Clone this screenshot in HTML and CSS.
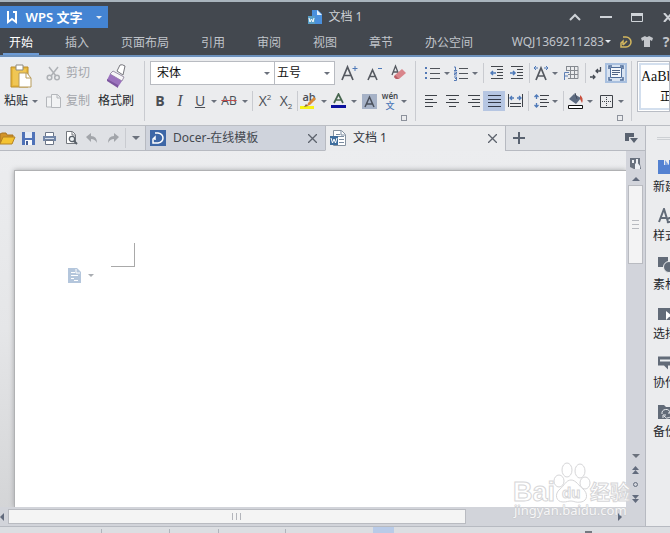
FILE: index.html
```html
<!DOCTYPE html>
<html lang="zh-CN">
<head>
<meta charset="utf-8">
<meta name="viewport" content="width=device-width, initial-scale=1">
<title>文档 1 - WPS 文字</title>
<link rel="stylesheet" href="styles.css">
</head>
<body>
<header class="top">
  <div class="titlebar">
    <button class="brand" type="button">
      <svg width="12" height="13" viewBox="0 0 12 13" fill="none" stroke="#fff" stroke-width="2"><path d="M2 0v11L6 8l4 3V1H7"/></svg>
      <span>WPS 文字</span>
      <i class="caret light"></i>
    </button>
    <div class="doc-title">
      <svg width="15" height="15" viewBox="0 0 15 15"><path d="M4 0h6l4 4v10H4z" fill="#4a90dd"/><path d="M9 0l5 5H9z" fill="#e4f0fb"/><path d="M0 6h7v8H0z" fill="#5aa0c8"/><path d="M1 8l1 4 1.500-3L5 12l1-4" fill="none" stroke="#fff"/></svg>
      <span>文档 1</span>
    </div>
    <div class="window-buttons">
      <button type="button" aria-label="折叠功能区"><svg width="12" height="8" viewBox="0 0 12 8" fill="none" stroke="#cfd3d8" stroke-width="2"><path d="M1 7l5-5 5 5"/></svg></button>
      <button type="button" aria-label="最小化"><svg width="12" height="8" viewBox="0 0 12 8"><path d="M0 3h12v2H0z" fill="#cfd3d8"/></svg></button>
      <button type="button" aria-label="最大化"><svg width="12" height="9" viewBox="0 0 12 9"><path d="M.5.5h11v8H.5z" fill="none" stroke="#cfd3d8"/><path d="M0 0h12v3H0z" fill="#cfd3d8"/></svg></button>
      <button type="button" aria-label="关闭"><svg width="10" height="9" viewBox="0 0 10 9" stroke="#cfd3d8" stroke-width="2"><path d="M1 0l8 9M9 0L1 9"/></svg></button>
    </div>
  </div>
  <nav class="menu">
    <a class="active" href="#">开始</a><a href="#">插入</a><a href="#">页面布局</a><a href="#">引用</a><a href="#">审阅</a><a href="#">视图</a><a href="#">章节</a><a href="#">办公空间</a>
    <div class="account">
      <button class="user" type="button">WQJ1369211283<i class="caret light"></i></button>
      <button type="button" aria-label="Docer"><svg width="12" height="12" viewBox="0 0 12 12" fill="none" stroke="#d3b75f" stroke-width="1.500"><path d="M3 1h3a5 5 0 0 1 0 10H1V7l2-2v4M3 9l4-4"/></svg></button>
      <button type="button" aria-label="皮肤"><svg width="12" height="11" viewBox="0 0 12 11"><path d="M0 2l4-2q2 2 4 0l4 2-1 3-2-1v7H3V4L1 5z" fill="#c4c7cc"/></svg></button>
      <button class="help" type="button">?</button>
    </div>
  </nav>
</header>

<section class="ribbon">
  <div class="clipboard">
    <button class="big paste" type="button">
      <svg width="22" height="25" viewBox="0 0 22 25"><path d="M1 3h17v20H1z" fill="#e9b93d" stroke="#b98b2b"/><path d="M3 5h13v16H3z" fill="#f0c654"/><path d="M6 1h7v5H6z" fill="#fff" stroke="#8d8a80"/><path d="M9 9h8l4 5v9H9z" fill="#fff" stroke="#b79b5a"/><path d="M16 9v5h5" fill="none" stroke="#b79b5a"/></svg>
      <span>粘贴<i class="caret"></i></span>
    </button>
    <div class="stack">
      <button type="button" disabled><svg width="15" height="15" viewBox="0 0 15 15" fill="none" stroke="#aeb1b5" stroke-width="1.500"><path d="M3 1l7 9M12 1L5 10"/><circle cx="3.500" cy="11.500" r="2.300"/><circle cx="11" cy="11.500" r="2.300"/></svg>剪切</button>
      <button type="button" disabled><svg width="15" height="15" viewBox="0 0 15 15" fill="#f2f3f4" stroke="#b4b7bb"><path d="M5 3H.5v10H6"/><path d="M5.500.5h6l3 3v10h-9zM11 .5V4h3.500"/></svg>复制</button>
    </div>
    <button class="big painter" type="button">
      <svg width="21" height="25" viewBox="0 0 21 25"><path d="M14 1q2-1 5 1l-2 9-6-4z" fill="#fff" stroke="#77777d"/><path d="M7 7l11 6-2 4L4 10z" fill="#f7f5f8" stroke="#9b92a8"/><path d="M4 10l12 7-4 6L1 16z" fill="#9b72bd"/><path d="M1 15l11 6v3L1 17z" fill="#7d569f"/></svg>
      <span>格式刷</span>
    </button>
  </div>

  <div class="group font-group">
    <div class="row font-picks">
      <label class="pick name"><select aria-label="字体"><option>宋体</option></select><i class="caret"></i></label>
      <label class="pick size"><select aria-label="字号"><option>五号</option></select><i class="caret"></i></label>
      <div class="size-tools">
      <button type="button" aria-label="增大字号"><svg width="18" height="18" viewBox="0 0 18 18" fill="none"><path d="M1 16L6.500 3 12 16M3 11.500h7" stroke="#555960" stroke-width="1.700"/><path d="M14 2v5M11.500 4.500h5" stroke="#4e79b8"/></svg></button>
      <button type="button" aria-label="减小字号"><svg width="18" height="18" viewBox="0 0 18 18" fill="none"><path d="M2 16L6.500 6 11 16M3.500 12.500h6" stroke="#555960" stroke-width="1.600"/><path d="M12 4.500h4" stroke="#4e79b8"/></svg></button>
      <button type="button" aria-label="清除格式"><svg width="16" height="18" viewBox="0 0 16 18"><path d="M1 11l3.500-9L8 11M2 8h5" fill="none" stroke="#555960" stroke-width="1.300"/><path d="M4 11l7-6 4 4-7 6H5l-2-2z" fill="#d9858b"/><path d="M4 11l4 4H5l-2-2z" fill="#b75e67"/></svg></button>
      </div>
    </div>
    <div class="row font-tools">
      <button class="glyph bold" type="button">B</button>
      <button class="glyph italic" type="button">I</button>
      <button class="glyph under" type="button">U</button>
      <button type="button" aria-label="下划线样式"><i class="caret"></i></button>
      <button class="glyph strike" type="button">AB</button>
      <button type="button" aria-label="删除线样式"><i class="caret"></i></button>
      <i class="sep"></i>
      <button class="glyph" type="button">X<sup>2</sup></button>
      <button class="glyph" type="button">X<sub>2</sub></button>
      <i class="sep"></i>
      <button class="glyph mark" type="button">ab<svg width="16" height="16" viewBox="0 0 16 16"><path d="M0 12h14v3H0z" fill="#f7f315"/><path d="M14 3l2 2-6 6-3 1 1-3z" fill="#dc8a35"/><path d="M6 10l2 2-4 1z" fill="#8a6545"/></svg></button>
      <button type="button" aria-label="突出显示颜色"><i class="caret"></i></button>
      <button type="button" aria-label="字体颜色"><svg width="16" height="16" viewBox="0 0 16 16"><path d="M3 10L7.500 1 12 10M4.500 7h6" fill="none" stroke="#48664f" stroke-width="1.700"/><path d="M0 12h15v3H0z" fill="#0c119e"/></svg></button>
      <button type="button" aria-label="选择字体颜色"><i class="caret"></i></button>
      <button type="button" aria-label="字符底纹"><svg width="15" height="15" viewBox="0 0 15 15"><path d="M0 0h15v15H0z" fill="#a6b2c7"/><path d="M3 13L7.500 3 12 13M4.500 10h6" fill="none" stroke="#4a505b" stroke-width="1.500"/></svg></button>
      <button class="phonetic" type="button"><span>wén</span><b>文</b></button>
      <button type="button" aria-label="拼音指南选项"><i class="caret"></i></button>
    </div>
    <button class="launch" type="button" aria-label="字体设置"></button>
  </div>

  <div class="group para-group">
    <div class="row para-top">
      <button type="button" aria-label="项目符号"><svg width="15" height="13" viewBox="0 0 15 13"><path d="M0 0h2v2H0zM0 5h2v2H0zM0 10h2v2H0z" fill="#5479b5"/><path d="M5 1.500h10M5 6.500h10M5 11.500h10" stroke="#50545a"/></svg></button>
      <button type="button" aria-label="项目符号样式"><i class="caret"></i></button>
      <button type="button" aria-label="编号"><svg width="14" height="15" viewBox="0 0 14 15" fill="none"><path d="M5 2.500h9M5 7.500h9M5 12.500h9" stroke="#50545a"/><path d="M0 1h1.500v3M0 4.500h3M0 6h2.500v1.500H.5v1.500H3M0 11h2.500v3.500H0M1 12.500h2" stroke="#5479b5"/></svg></button>
      <button type="button" aria-label="编号样式"><i class="caret"></i></button>
      <i class="sep"></i>
      <button type="button" aria-label="减少缩进"><svg width="14" height="14" viewBox="0 0 14 14" fill="none"><path d="M1 .5h12M7 3.500h6M7 6.500h6M7 9.500h6M1 12.500h12" stroke="#44484d"/><path d="M6 7H1M3 5L1 7l2 2" stroke="#4e79b8" stroke-width="1.500"/></svg></button>
      <button type="button" aria-label="增加缩进"><svg width="14" height="14" viewBox="0 0 14 14" fill="none"><path d="M1 .5h12M7 3.500h6M7 6.500h6M7 9.500h6M1 12.500h12" stroke="#44484d"/><path d="M0 7h5M3 5l2 2-2 2" stroke="#4e79b8" stroke-width="1.500"/></svg></button>
      <i class="sep"></i>
      <button type="button" aria-label="中文版式"><svg width="16" height="16" viewBox="0 0 16 16" fill="none"><path d="M3 15L8 3l5 12M4.500 11h7" stroke="#555960" stroke-width="1.700"/><path d="M1 3h4M3 1L1 3l2 2M11 3h4M13 1l2 2-2 2" stroke="#4e79b8"/></svg></button>
      <button type="button" aria-label="中文版式选项"><i class="caret"></i></button>
      <button type="button" aria-label="插入表格"><svg width="15" height="14" viewBox="0 0 15 14" fill="none"><path d="M2 .5h12v12H4M2 4.500h12M4 8.500h10M6.500.5v12M10.500.5v12M2.500 0v5" stroke="#85898f"/><path d="M.5 14V6.500H5M0 10h4" stroke="#5f80b5"/></svg></button>
      <i class="sep"></i>
      <button type="button" aria-label="显示段落标记"><svg width="12" height="13" viewBox="0 0 12 13" fill="none" stroke="#444a53" stroke-width="1.300"><path d="M10.500 0v4H6M8 2L6 4l2 2M0 10h5M3 8l2 2-2 2"/></svg></button>
      <button class="selected framed" type="button" aria-label="段落布局"><svg width="16" height="16" viewBox="0 0 16 16" fill="none"><path d="M2.500 2.500h11v10h-11z" fill="#f3f6fa" stroke="#4f6d99"/><path d="M4 5.500h8M4 7.500h8M4 9.500h6" stroke="#4f6383"/><path d="M1 4V1h3M12 1h3v3M15 12v3h-3M4 15H1v-3" stroke="#4f6d99" stroke-width="1.500"/></svg></button>
    </div>
    <div class="row para-bottom">
      <button type="button" aria-label="左对齐"><svg width="13" height="12" viewBox="0 0 13 12" stroke="#3e4248"><path d="M0 .5h12M0 4.500h8M0 7.500h12M0 11.500h8"/></svg></button>
      <button type="button" aria-label="居中"><svg width="13" height="12" viewBox="0 0 13 12" stroke="#3e4248"><path d="M0 .5h13M3 4.500h7M0 7.500h13M3 11.500h7"/></svg></button>
      <button type="button" aria-label="右对齐"><svg width="13" height="12" viewBox="0 0 13 12" stroke="#3e4248"><path d="M1 .5h12M5 4.500h8M1 7.500h12M5 11.500h8"/></svg></button>
      <button class="selected" type="button" aria-label="两端对齐"><svg width="13" height="12" viewBox="0 0 13 12" stroke="#333a49"><path d="M0 .5h13M0 4.500h13M0 7.500h13M0 11.500h13"/></svg></button>
      <button type="button" aria-label="分散对齐"><svg width="15" height="14" viewBox="0 0 15 14" fill="none"><path d="M.5 0v13M14.500 0v13M2 9.500h11M2 12.500h11" stroke="#3e4248"/><path d="M2 4h4M4 2L2 4l2 2M9 4h4M11 2l2 2-2 2" stroke="#4e79b8" stroke-width="1.300"/></svg></button>
      <i class="sep"></i>
      <button type="button" aria-label="行距"><svg width="15" height="14" viewBox="0 0 15 14" fill="none"><path d="M6 1.500h9M6 5.500h7M6 8.500h9M6 12.500h7" stroke="#3e4248"/><path d="M2.500 1v4M.5 3l2-2 2 2M2.500 9v4M.5 11l2 2 2-2" stroke="#4e79b8" stroke-width="1.300"/></svg></button>
      <button type="button" aria-label="行距选项"><i class="caret"></i></button>
      <i class="sep"></i>
      <button type="button" aria-label="底纹颜色"><svg width="16" height="16" viewBox="0 0 16 16"><path d="M6 1l7 4-5 6-7-5z" fill="#5d6b80"/><path d="M7 0l2 6" stroke="#434d5e" fill="none"/><path d="M12 2q4 3 2 8l-2-4z" fill="#c9503f"/><path d="M.5 12.500h14v3H.5z" fill="#fff" stroke="#111"/></svg></button>
      <button type="button" aria-label="选择底纹颜色"><i class="caret"></i></button>
      <button type="button" aria-label="边框"><svg width="13" height="13" viewBox="0 0 13 13" fill="none" stroke="#3e4248"><path d="M.5.500h12v12H.5z"/><path d="M2 6.500h10M6.500 2v10" stroke-dasharray="1 1"/></svg></button>
      <button type="button" aria-label="边框样式"><i class="caret"></i></button>
    </div>
    <button class="launch" type="button" aria-label="段落设置"></button>
  </div>

  <div class="styles">
    <button class="style-card" type="button"><span>AaBbCcDd</span><b>正文</b></button>
  </div>
</section>

<div class="workspace">
  <main class="editor">
    <div class="docbar">
      <div class="quick">
        <button type="button" aria-label="打开"><svg width="17" height="13" viewBox="0 0 17 13"><path d="M1 11V2l2-1h4l1 2h6v3" fill="#d29328" stroke="#a87422"/><path d="M4 5h12l-3 7H1z" fill="#f4c332" stroke="#b58323"/></svg></button>
        <button type="button" aria-label="保存"><svg width="13" height="13" viewBox="0 0 13 13"><path d="M0 0h13v13H0z" fill="#4f72b8"/><path d="M3 0h7v6H3z" fill="#e6ecf6"/><path d="M3 8h7v5H3z" fill="#f7f9fc"/><path d="M4 9h2v4H4z" fill="#455f98"/></svg></button>
        <button type="button" aria-label="打印"><svg width="13" height="13" viewBox="0 0 13 13"><path d="M2.500.5h8v4h-8z" fill="#fff" stroke="#6c7688"/><path d="M0 4h13v5H0z" fill="#7286a8"/><path d="M2 6h9v1H2z" fill="#d5deeb"/><path d="M2.500 8.500h8v4h-8z" fill="#fff" stroke="#6c7688"/></svg></button>
        <button type="button" aria-label="打印预览"><svg width="13" height="14" viewBox="0 0 13 14"><path d="M1.500.5h6l3 3v9h-9z" fill="#fff" stroke="#73777d"/><path d="M7 1v3h3" fill="none" stroke="#73777d"/><circle cx="7" cy="8" r="2.700" fill="#edf2f5" stroke="#596069" stroke-width="1.300"/><path d="M9 10l3 3" stroke="#596069" stroke-width="2"/></svg></button>
        <button type="button" aria-label="撤销"><svg width="12" height="10" viewBox="0 0 12 10"><path d="M5 0v3q6 0 6 7-2-4-6-4v3L0 4z" fill="#a2a5aa"/></svg></button>
        <button type="button" aria-label="恢复"><svg width="12" height="10" viewBox="0 0 12 10"><path d="M7 0v3q-6 0-6 7 2-4 6-4v3l5-5z" fill="#a2a5aa"/></svg></button>
        <i class="sep"></i>
        <button type="button" aria-label="自定义快速访问"><i class="caret wide"></i></button>
      </div>
      <div class="doc-tab">
        <svg width="16" height="16" viewBox="0 0 16 16"><path d="M0 0h16v16H0z" fill="#3d67a7"/><path d="M5 3h3q5 1 5 5t-5 5H3V9l2-2v3" fill="none" stroke="#fff" stroke-width="1.500"/></svg>
        <a href="#">Docer-在线模板</a>
        <button type="button" aria-label="关闭 Docer"><svg width="9" height="9" viewBox="0 0 9 9" stroke="#5d636d" stroke-width="1.300"><path d="M0 0l9 9M9 0L0 9"/></svg></button>
      </div>
      <div class="doc-tab current">
        <svg width="16" height="16" viewBox="0 0 16 16"><path d="M3.500.5h8l4 4v11h-12z" fill="#fff" stroke="#85919f"/><path d="M11 1v4h4M6 4.500h4M6 6.500h8M9 9.500h5M9 12.500h5" stroke="#7c8da1" fill="none"/><path d="M0 6h8v9H0z" fill="#3e6d9d"/><path d="M1 8l1.500 5L4 9l1.500 4L7 8" stroke="#fff" fill="none"/></svg>
        <a href="#">文档 1</a>
        <button type="button" aria-label="关闭文档 1"><svg width="9" height="9" viewBox="0 0 9 9" stroke="#5d636d" stroke-width="1.300"><path d="M0 0l9 9M9 0L0 9"/></svg></button>
      </div>
      <div class="tab-rest">
        <button type="button" aria-label="新建标签"><svg width="12" height="12" viewBox="0 0 12 12" fill="#596270"><path d="M5 0h2v5h5v2H7v5H5V7H0V5h5z"/></svg></button>
        <button type="button" aria-label="标签列表"><svg width="13" height="11" viewBox="0 0 13 11" fill="#596270"><path d="M0 0h9v4H4v4H0zM5 5h8L9 10z"/></svg></button>
      </div>
    </div>

    <div class="view">
      <div class="canvas">
        <article class="page" contenteditable="true" aria-label="文档内容">
          <div class="corner"></div>
          <div class="paste-options">
            <svg width="13" height="15" viewBox="0 0 13 15"><path d="M0 0h9l4 4v11H0z" fill="#b4c6dc"/><path d="M8 1v4h4M3 4.500h4M3 7.500h7M3 10.500h3M6 12.500h4" fill="none" stroke="#fff"/></svg>
            <i class="caret pale"></i>
          </div>
        </article>
      </div>
      <div class="vscroll">
        <button class="ruler" type="button" aria-label="标尺"><svg width="11" height="11" viewBox="0 0 11 11"><path d="M0 0h10v6l1 5H4L0 9z" fill="#69717e"/><path d="M2 2h2v3H2zM6 1h2v4H6zM5 6l2-2 3 4v3H5z" fill="#edf0f4"/></svg></button>
        <i class="up"></i>
        <div class="thumb"><i></i><i></i><i></i></div>
        <div class="browse">
          <i class="caret wide"></i>
          <svg width="7" height="8" viewBox="0 0 7 8" fill="#626b7d"><path d="M0 4l3.500-4L7 4zM0 8l3.500-4L7 8z"/></svg>
          <svg width="5" height="5" viewBox="0 0 5 5"><circle cx="2.500" cy="2.500" r="2" fill="none" stroke="#626b7d"/></svg>
          <svg width="7" height="8" viewBox="0 0 7 8" fill="#626b7d"><path d="M0 0h7L3.500 4zM0 4h7L3.500 8z"/></svg>
        </div>
      </div>
      <svg class="watermark" width="122" height="60" viewBox="0 0 122 60" aria-hidden="true">
        <g class="wm-line">
          <ellipse cx="47" cy="20" rx="5" ry="6"/><ellipse cx="55" cy="9" rx="5" ry="7"/><ellipse cx="68" cy="10" rx="5" ry="7"/><ellipse cx="73" cy="22" rx="5" ry="6"/>
          <path d="M59 19c-5 0-7 6-11 9-6 5-4 13 3 13 4 0 5-1 8-1s5 2 10 1c7-1 7-9 2-13-4-3-7-9-12-9z"/>
        </g>
        <text class="wm-latin" x="1" y="40">Bai</text>
        <text class="wm-du" x="50" y="37">du</text>
        <text class="wm-cjk" x="78" y="39">经验</text>
        <text class="wm-url" x="2" y="54">jingyan.baidu.com</text>
      </svg>
    </div>
    <div class="hscroll"><i class="left"></i><div class="hthumb"><i></i><i></i><i></i></div><i class="right"></i></div>
  </main>

  <aside class="side">
    <div class="grip"></div>
    <button type="button"><svg width="18" height="14" viewBox="0 0 18 14"><path d="M0 0h6v5h5V0h7v14H0z" fill="#5381d1"/><path d="M7 0l4 5H7z" fill="#7ea3e2"/></svg><span>新建</span></button>
    <button type="button"><svg width="18" height="16" viewBox="0 0 18 16" fill="none" stroke="#626b78"><path d="M1 14L6 1l4 13M3 10h6" stroke-width="2"/><path d="M9 14q4 1 8-5M9 11l5-2" stroke-width="2"/></svg><span>样式</span></button>
    <button type="button"><svg width="18" height="16" viewBox="0 0 18 16"><path d="M0 0h10v10H0z" fill="#626b78"/><circle cx="11" cy="10" r="5.500" fill="#626b78" stroke="#ebecee"/></svg><span>素材</span></button>
    <button type="button"><svg width="18" height="12" viewBox="0 0 18 12"><path d="M0 0h18v12H0z" fill="#626b78"/><path d="M8 3l6 5-3 1-3 3z" fill="#fff"/></svg><span>选择</span></button>
    <button type="button"><svg width="18" height="13" viewBox="0 0 18 13"><path d="M0 0h18v9h-8v4L6 9H0z" fill="#626b78"/><path d="M2 3h16v2H2z" fill="#edf0f2"/></svg><span>协作</span></button>
    <button type="button"><svg width="18" height="14" viewBox="0 0 18 14"><path d="M0 0h6l2 2h10v12H0z" fill="#626b78"/><path d="M4 9a4 4 0 0 1 8-1M13 7a4 4 0 0 1-7 4M10 8h3V5M8 10H5v3" fill="none" stroke="#e9ecef"/></svg><span>备份</span></button>
  </aside>
</div>
<footer class="status"><i></i><i></i><i></i><i></i><div class="view-mode"></div><div class="zoom-knob"></div></footer>
</body>
</html>
```

FILE: styles.css
```css
* { box-sizing: border-box; }
body {
  margin: 0;
  height: 100vh;
  display: flex;
  flex-direction: column;
  overflow: hidden;
  background: #ebecee;
  color: #24272c;
  font: 12px/16px "Noto Sans", "Noto Sans CJK SC", sans-serif;
}
button {
  display: flex;
  align-items: center;
  justify-content: center;
  padding: 0;
  border: 0;
  background: none;
  color: inherit;
  font: inherit;
  white-space: nowrap;
}
a { color: inherit; text-decoration: none; white-space: nowrap; }
svg { display: block; flex: none; }
.caret {
  flex: none;
  width: 0;
  height: 0;
  border: 3px solid transparent;
  border-top-color: #6b717c;
  border-bottom: 0;
}
.caret.light { border-top-color: #e6ebf1; }
.caret.wide { border-width: 4px 4px 0; }
.caret.pale { border-top-color: #a9adb2; }
.sep { width: 1px; height: 20px; background: #c9cbd0; justify-self: center; }

/* Title and menu */
.top {
  border-top: 6px solid #43484f;
  border-bottom: 2px solid #6c91bd;
  background: #43484f;
  flex: none;
}
.top::before {
  content: "";
  display: block;
  height: 2px;
  margin-top: -6px;
  margin-bottom: 4px;
  background: #a9b4bd;
}
.titlebar {
  display: grid;
  grid-template-columns: 1fr auto 1fr;
  height: 22px;
  align-items: center;
  color: #cdd1d6;
}
.brand {
  justify-self: start;
  width: 108px;
  height: 22px;
  gap: 8px;
  background: #4484d3;
  color: #fff;
  font-size: 13px;
  font-weight: 600;
}
.brand .caret { margin-left: 6px; }
.doc-title { display: flex; align-items: center; gap: 6px; }
.window-buttons {
  justify-self: end;
  display: flex;
  gap: 10px;
  margin-right: -8px;
}
.window-buttons button { width: 21px; height: 20px; }
.menu {
  display: flex;
  gap: 32px;
  height: 27px;
  padding-left: 9px;
  color: #c0c4ca;
}
.menu a { line-height: 29px; }
.menu .active {
  margin: 0 -6px;
  padding: 0 6px;
  color: #fff;
  box-shadow: inset 0 -2px #6c9bd6;
}
.account {
  margin-left: auto;
  display: flex;
  align-items: center;
  gap: 9px;
}
.user { gap: 1px; }
.help { width: 8px; font-size: 14px; font-weight: 700; }

/* Ribbon */
.ribbon {
  flex: none;
  display: flex;
  height: 69px;
  padding-top: 4px;
  overflow: hidden;
  border-bottom: 1px solid #bbbec4;
  background: #ebecee;
  box-shadow: inset 0 2px #e4edf9;
}
.clipboard {
  flex: none;
  display: flex;
  width: 145px;
  height: 60px;
  padding-left: 3px;
  border-right: 1px solid #c9cbd0;
}
.big { flex-direction: column; justify-content: flex-start; gap: 4px; height: 52px; padding-top: 3px; }
.big span { display: flex; align-items: center; gap: 4px; }
.paste { width: 36px; }
.stack { display: flex; flex-direction: column; gap: 4px; margin: 0 8px 0 7px; }
.stack button { height: 24px; gap: 5px; color: #a3a6ab; }
.group { flex: none; height: 60px; padding-left: 5px; border-right: 1px solid #c9cbd0; }
.font-group { width: 271px; }
.para-group { width: 216px; }
.row { display: grid; height: 24px; align-items: center; margin-bottom: 4px; }
.row button { height: 20px; }
.font-picks { grid-template-columns: 125px 60px auto; }
.size-tools { display: flex; gap: 7px; padding-left: 6px; }
.pick {
  display: flex;
  align-items: center;
  height: 24px;
  padding-right: 4px;
  border: 1px solid #b8bbc1;
  background: #fff;
}
.pick.size { border-left: 0; }
.pick select {
  appearance: none;
  flex: 1;
  min-width: 0;
  padding: 0 2px;
  border: 0;
  background: none;
  color: #111;
  font: inherit;
}
.pick.name select { padding-left: 6px; }
.font-tools { grid-template-columns: 20px 20px 20px 8px 22px 10px 4px 22px 20px 2px 22px 8px 22px 8px 22px 20px 8px; }
.para-top { grid-template-columns: 22px 8px 20px 8px 8px 20px 20px 4px 20px 8px 24px 4px 18px 22px; }
.para-bottom { grid-template-columns: 20px 22px 20px 22px 20px 6px 20px 8px 8px 18px 10px 22px 8px; }
.glyph { color: #4a4e55; font: 14px/20px "Open Sans", sans-serif; }
.bold { font-weight: 700; }
.italic { font-family: "Liberation Serif", serif; font-style: italic; font-size: 16px; }
.under { text-decoration: underline; }
.strike { font-size: 12px; text-decoration: line-through #c24b4b; }
.glyph sup, .glyph sub { font-size: 8px; line-height: 8px; }
.glyph sup { align-self: flex-start; margin-top: 2px; }
.glyph sub { align-self: flex-end; margin-bottom: 1px; }
.mark { position: relative; font-size: 11px; font-weight: 600; line-height: 12px; align-items: flex-start; }
.mark svg { position: absolute; inset: 3px 2px; }
.phonetic { flex-direction: column; font-size: 8px; line-height: 9px; font-weight: 600; color: #45494f; }
.phonetic b { color: #4e79b8; font-size: 9px; line-height: 11px; font-weight: 500; }
.selected { background: #b6c6e2; }
.framed { border: 2px solid #a9c0df; background: #d8e3f1; }
.launch {
  width: 6px;
  height: 6px;
  margin: -2px 8px 0 auto;
  border: 1px solid #8d929c;
  border-width: 1px 0 0 1px;
  box-shadow: inset -1px -1px #8d929c;
}
.styles {
  flex: 1;
  min-width: 0;
  height: 51px;
  margin-left: 5px;
  padding: 1px;
  overflow: hidden;
  border: 1px solid #b9bdc5;
  background: #fff;
}
.style-card {
  width: 66px;
  height: 47px;
  flex-direction: column;
  align-items: center;
  gap: 3px;
  border: 2px solid #d3dfee;
  color: #111;
}
.style-card span { width: 62px; overflow: hidden; font: 14px/18px "Liberation Serif", serif; }
.style-card b { font-weight: 400; }

/* Workspace */
.workspace { flex: 1; min-height: 0; display: flex; }
.editor { flex: 1; min-width: 0; display: flex; flex-direction: column; }
.docbar {
  flex: none;
  display: flex;
  height: 25px;
  background: #dfe1e5;
}
.quick {
  display: grid;
  grid-template-columns: 18px 21px 21px 22px 20px 22px 2px 19px;
  align-items: center;
  width: 145px;
  border-bottom: 1px solid #b7bac1;
}
.quick button:first-child { margin-left: -4px; }
.doc-tab {
  flex: 0 1 180px;
  min-width: 0;
  display: flex;
  align-items: center;
  gap: 7px;
  padding: 0 8px 0 4px;
  border: 1px solid #b7bac1;
  border-width: 0 0 1px 1px;
  background: #cfd3dc;
  color: #44484f;
}
.doc-tab a { flex: 1; }
.doc-tab.current { border-bottom-color: #ebecee; background: #ebecee; color: #33373e; }
.tab-rest {
  flex: 1;
  display: flex;
  justify-content: space-between;
  padding: 0 7px;
  border: 1px solid #b7bac1;
  border-width: 0 0 1px 1px;
}
.view { flex: 1; min-height: 0; display: flex; position: relative; }
.canvas {
  flex: 1;
  padding: 19px 0 0 14px;
  overflow: hidden;
  background: linear-gradient(#ecedef, #e5e6e8 50%, #d4d5d7);
}
.page {
  height: 100%;
  padding: 72px 0 0 53px;
  border: 1px solid #b0b1b3;
  border-width: 1px 0 0 1px;
  background: #fff;
  box-shadow: 0 0 5px #a5a6a8;
  outline: 0;
}
.corner {
  width: 24px;
  height: 24px;
  margin-left: 43px;
  border: 1px solid #a9a9a9;
  border-width: 0 1px 1px 0;
}
.paste-options { display: flex; align-items: center; gap: 7px; margin-top: 1px; }
.vscroll {
  flex: none;
  width: 19px;
  display: flex;
  flex-direction: column;
  align-items: center;
  padding: 7px 0 4px;
  background: #d2d4db;
}
.up { margin: 8px 0 4px; border: 4px solid transparent; border-top: 0; border-bottom-color: #626b7d; }
.thumb {
  width: 15px;
  height: 79px;
  display: flex;
  flex-direction: column;
  align-items: center;
  justify-content: center;
  gap: 3px;
  border: 1px solid #b9bbc1;
  background: #f3f3f4;
}
.thumb i { width: 7px; height: 1px; background: #b8bac0; }
.browse { margin-top: auto; display: flex; flex-direction: column; align-items: center; gap: 8px; }
.hscroll {
  flex: none;
  display: flex;
  align-items: center;
  height: 19px;
  background: #d2d4da;
}
.left, .right { border: 4px solid transparent; }
.left { border-right-color: #626b7d; border-left: 0; margin-right: 4px; }
.right { border-left-color: #626b7d; border-right: 0; margin: 0 23px 0 auto; }
.hthumb {
  flex: 0 1 71%;
  height: 15px;
  display: flex;
  align-items: center;
  justify-content: center;
  gap: 3px;
  border: 1px solid #b9bbc1;
  background: #f4f4f4;
}
.hthumb i { width: 1px; height: 7px; background: #b3b5bb; }
.watermark { position: absolute; right: 11px; bottom: -14px; overflow: visible; pointer-events: none; }
.watermark text, .wm-line { fill: #fff; stroke: #d6d6d8; stroke-width: 1px; }
.wm-latin { font: 700 27px "Liberation Sans", sans-serif; }
.wm-du { font: 700 15px "Liberation Sans", sans-serif; }
.wm-cjk { font: 700 20px "Noto Sans CJK SC", sans-serif; }
.watermark .wm-url { font: 13px "Noto Sans", sans-serif; fill: #f6f6f7; stroke: #c9cacd; paint-order: stroke; }

/* Task pane */
.side {
  flex: none;
  width: 25px;
  overflow: hidden;
  padding: 11px 0 0 7px;
  border-left: 1px solid #b7bac1;
}
.grip { height: 3px; margin: 0 0 19px 4px; border: 1px solid #cdd0d4; border-width: 1px 0; }
.side button { width: 28px; height: 49px; flex-direction: column; justify-content: flex-start; gap: 4px; }
.side svg { height: 16px; }
.side span { width: 28px; text-align: left; }

/* Status */
.status {
  flex: none;
  display: grid;
  grid-template-columns: 102px 68px 49px 67px 87px 21px 1fr 7px 78px;
  height: 7px;
  border-top: 1px solid #b7bac1;
  background: #dcdee2;
}
.status i { border-right: 1px solid #b0b4bc; margin-top: 2px; }
.view-mode { grid-column: 6; background: #b9cbe8; }
.zoom-knob { grid-column: 8; margin-top: 4px; background: #747981; }
```
